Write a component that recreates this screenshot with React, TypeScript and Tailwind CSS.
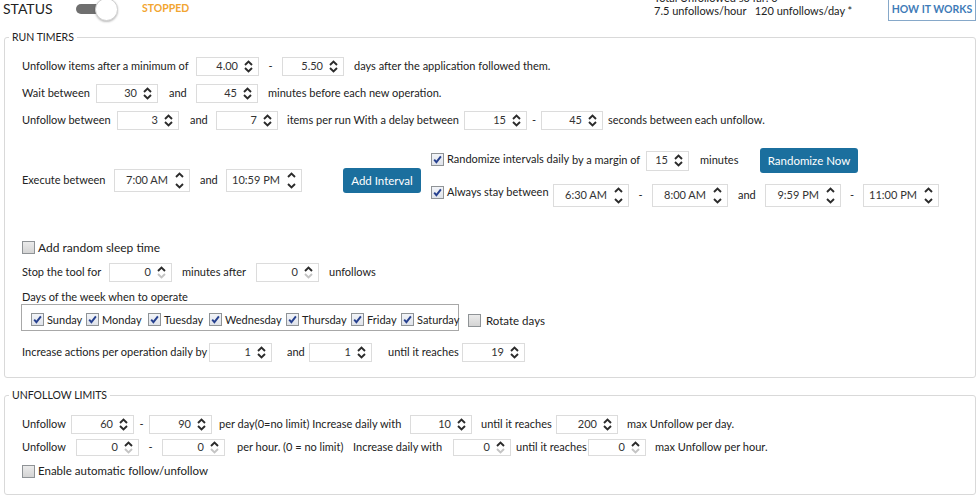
import type { ReactNode } from "react";

/** Up/down arrows of a WPF numeric spinner. */
function Arrows({ off, tall }: { off?: boolean; tall?: boolean }) {
  if (tall) {
    return (
      <svg width="9" height="17" viewBox="0 0 9 17" className="ml-[7px] shrink-0">
        <path d="M1 5 L4.5 1.5 L8 5" fill="none" stroke="#2b2b2b" strokeWidth="1.9" />
        <path d="M1 12 L4.5 15.5 L8 12" fill="none" stroke={off ? "#c4c4c4" : "#2b2b2b"} strokeWidth="1.9" />
      </svg>
    );
  }
  return (
    <svg width="9" height="13" viewBox="0 0 9 13" className="ml-[6px] shrink-0">
      <path d="M1 5 L4.5 1.5 L8 5" fill="none" stroke="#2b2b2b" strokeWidth="1.9" />
      <path d="M1 8 L4.5 11.5 L8 8" fill="none" stroke={off ? "#c4c4c4" : "#2b2b2b"} strokeWidth="1.9" />
    </svg>
  );
}

function Spin({
  value,
  className,
  off,
  tall,
}: {
  value: string;
  className: string;
  off?: boolean;
  tall?: boolean;
}) {
  return (
    <div
      className={`flex shrink-0 items-center justify-end border border-[#dcdcdc] bg-white pr-[5px] text-[#333] ${className}`}
    >
      <span>{value}</span>
      <Arrows off={off} tall={tall} />
    </div>
  );
}

function Check({ on, children, className = "" }: { on?: boolean; children: ReactNode; className?: string }) {
  return (
    <label className={`flex shrink-0 items-center ${className}`}>
      <span
        className={`mr-[3px] flex h-[13px] w-[13px] shrink-0 items-center justify-center border border-[#8f9396] ${
          on ? "bg-gradient-to-b from-[#f2f4f8] to-[#dfe3ea]" : "bg-gradient-to-b from-[#ebebeb] to-[#d4d4d4]"
        }`}
      >
        {on && (
          <svg width="11" height="11" viewBox="0 0 11 11">
            <path d="M2.2 5.6 L4.4 8.2 L8.9 2.4" fill="none" stroke="#26408f" strokeWidth="1.9" />
          </svg>
        )}
      </span>
      {children}
    </label>
  );
}

function Group({ title, children, className = "" }: { title: string; children: ReactNode; className?: string }) {
  return (
    <fieldset className={`ml-[4px] w-[972px] rounded-[3px] border border-[#d9d9d9] ${className}`}>
      <legend className="ml-[4px] px-[3px] text-[10.5px] leading-[14px] text-[#222]">{title}</legend>
      {children}
    </fieldset>
  );
}

const days = [
  ["Sunday", "w-[55px]"],
  ["Monday", "w-[62px]"],
  ["Tuesday", "w-[61px]"],
  ["Wednesday", "w-[77px]"],
  ["Thursday", "w-[65px]"],
  ["Friday", "w-[50px]"],
  ["Saturday", ""],
];

export default function App() {
  return (
    <div className="h-[501px] w-[980px] overflow-hidden whitespace-nowrap bg-white font-['Lato','Open_Sans',sans-serif] text-[11px] text-[#222]">
      {/* status bar */}
      <div className="flex h-[30px] items-start">
        <span className="ml-[3px] w-[73px] text-[14px] leading-[17px]">STATUS</span>
        <div className="relative mt-[4px] h-[10px] w-[30px] rounded-full bg-[#6f6f6f]">
          <span className="absolute -top-[6px] left-[19px] h-[23px] w-[23px] rounded-full border border-[#d0d0d0] bg-white shadow-[0_1px_2px_rgba(0,0,0,.25)]" />
        </div>
        <span className="ml-[36px] w-[48px] text-[10.5px] font-bold leading-[17px] text-[#f2a531]">STOPPED</span>
        <div className="ml-[464px] -mt-[9px] flex flex-col text-[11px] leading-[13px]">
          <span>Total Unfollowed so far: 0</span>
          <span>7.5 unfollows/hour&nbsp;&nbsp; 120 unfollows/day *</span>
        </div>
        <div className="ml-auto mr-[4px] -mt-[1px] flex h-[22px] w-[88px] items-center justify-center border border-[#86a8c9] text-[10.5px] font-bold text-[#3f7cb8]">
          HOW IT WORKS
        </div>
      </div>

      <Group title="RUN TIMERS">
        <div className="pb-[13px] pl-[17px] pt-[9px]">
          <div className="flex h-[27px] items-center">
            <span className="w-[174px]">Unfollow items after a minimum of</span>
            <Spin value="4.00" className="h-[19px] w-[63px]" />
            <span className="w-[23px] text-center">-</span>
            <Spin value="5.50" className="h-[19px] w-[62px]" />
            <span className="ml-[10px]">days after the application followed them.</span>
          </div>
          <div className="flex h-[27px] items-center">
            <span className="w-[74px]">Wait between</span>
            <Spin value="30" className="h-[19px] w-[62px]" />
            <span className="w-[38px] pl-[11px]">and</span>
            <Spin value="45" className="h-[19px] w-[62px]" />
            <span className="ml-[10px]">minutes before each new operation.</span>
          </div>
          <div className="flex h-[27px] items-center">
            <span className="w-[95px]">Unfollow between</span>
            <Spin value="3" className="h-[19px] w-[62px]" />
            <span className="w-[37px] pl-[11px]">and</span>
            <Spin value="7" className="h-[19px] w-[62px]" />
            <span className="w-[186px] pl-[9px]">items per run With a delay between</span>
            <Spin value="15" className="h-[19px] w-[63px]" />
            <span className="w-[14px] text-center">-</span>
            <Spin value="45" className="h-[19px] w-[62px]" />
            <span className="ml-[5px]">seconds between each unfollow.</span>
          </div>

          <div className="mt-[13px] flex items-start">
            <div className="flex h-[67px] items-center">
              <span className="w-[92px]">Execute between</span>
              <Spin value="7:00 AM" tall className="h-[23px] w-[76px]" />
              <span className="w-[36px] pl-[10px]">and</span>
              <Spin value="10:59 PM" tall className="h-[23px] w-[76px]" />
              <button className="ml-[41px] h-[25px] w-[78px] rounded-[3px] bg-[#1b6f9e] text-[11.5px] text-white">
                Add Interval
              </button>
            </div>
            <div className="ml-[10px] flex flex-col">
              <div className="flex h-[27px] items-center">
                <Check on className="w-[141px] -mt-[2px]">
                  <span className="text-[11px]">Randomize intervals daily</span>
                </Check>
                <span className="w-[74px]">by a margin of</span>
                <Spin value="15" className="h-[20px] w-[43px]" />
                <span className="w-[71px] pl-[11px]">minutes</span>
                <button className="h-[25px] w-[98px] rounded-[3px] bg-[#1b6f9e] text-[11.5px] text-white">
                  Randomize Now
                </button>
              </div>
              <div className="mt-[8px] flex h-[27px] items-center">
                <Check on className="w-[122px] -mt-[6px]">
                  <span className="text-[11px]">Always stay between</span>
                </Check>
                <Spin value="6:30 AM" tall className="h-[23px] w-[76px]" />
                <span className="w-[23px] text-center">-</span>
                <Spin value="8:00 AM" tall className="h-[23px] w-[76px]" />
                <span className="w-[37px] pl-[10px]">and</span>
                <Spin value="9:59 PM" tall className="h-[23px] w-[76px]" />
                <span className="w-[22px] text-center">-</span>
                <Spin value="11:00 PM" tall className="h-[23px] w-[76px]" />
              </div>
            </div>
          </div>

          <div className="mt-[21px] flex h-[25px] items-center">
            <Check>
              <span className="text-[12px]">Add random sleep time</span>
            </Check>
          </div>
          <div className="flex h-[24px] items-center">
            <span className="w-[87px]">Stop the tool for</span>
            <Spin value="0" off className="h-[19px] w-[63px]" />
            <span className="w-[84px] pl-[10px]">minutes after</span>
            <Spin value="0" off className="h-[19px] w-[63px]" />
            <span className="ml-[10px]">unfollows</span>
          </div>
          <div className="mt-[5px] leading-[16px]">Days of the week when to operate</div>
          <div className="-mt-[1px] flex items-end">
            <div className="-ml-[1px] flex h-[27px] w-[438px] items-end border border-[#a8a8a8] pb-[2px] pl-[9px]">
              {days.map(([d, w]) => (
                <Check on key={d} className={w}>
                  <span className="text-[11px]">{d}</span>
                </Check>
              ))}
            </div>
            <Check className="mb-[2px] ml-[9px]">
              <span className="ml-[2px] text-[11.5px]">Rotate days</span>
            </Check>
          </div>
          <div className="mt-[9px] flex h-[24px] items-center">
            <span className="w-[187px]">Increase actions per operation daily by</span>
            <Spin value="1" className="h-[19px] w-[63px]" />
            <span className="w-[37px] pl-[15px]">and</span>
            <Spin value="1" className="h-[19px] w-[63px]" />
            <span className="w-[90px] pl-[16px]">until it reaches</span>
            <Spin value="19" className="h-[19px] w-[63px]" />
          </div>
        </div>
      </Group>

      <Group title="UNFOLLOW LIMITS" className="mt-[10px]">
        <div className="pb-[12px] pl-[17px] pt-[11px]">
          <div className="flex h-[22px] items-center">
            <span className="w-[49px]">Unfollow</span>
            <Spin value="60" className="h-[19px] w-[63px]" />
            <span className="w-[15px] text-center">-</span>
            <Spin value="90" className="h-[19px] w-[63px]" />
            <span className="w-[198px] pl-[7px]">per day(0=no limit) Increase daily with</span>
            <Spin value="10" className="h-[19px] w-[62px]" />
            <span className="w-[84px] pl-[9px]">until it reaches</span>
            <Spin value="200" className="h-[19px] w-[62px]" />
            <span className="ml-[9px]">max Unfollow per day.</span>
          </div>
          <div className="mt-[1px] flex h-[22px] items-center">
            <span className="w-[54px]">Unfollow</span>
            <Spin value="0" off className="h-[17px] w-[63px]" />
            <span className="w-[23px] text-center">-</span>
            <Spin value="0" off className="h-[17px] w-[63px]" />
            <span className="w-[128px] pl-[12px]">per hour. (0 = no limit)</span>
            <span className="w-[100px]">Increase daily with</span>
            <Spin value="0" off className="h-[17px] w-[58px]" />
            <span className="w-[77px] pl-[5px]">until it reaches</span>
            <Spin value="0" off className="h-[17px] w-[58px]" />
            <span className="ml-[9px]">max Unfollow per hour.</span>
          </div>
          <div className="mt-[2px] flex h-[22px] items-center">
            <Check>
              <span className="text-[11.5px]">Enable automatic follow/unfollow</span>
            </Check>
          </div>
        </div>
      </Group>
    </div>
  );
}
